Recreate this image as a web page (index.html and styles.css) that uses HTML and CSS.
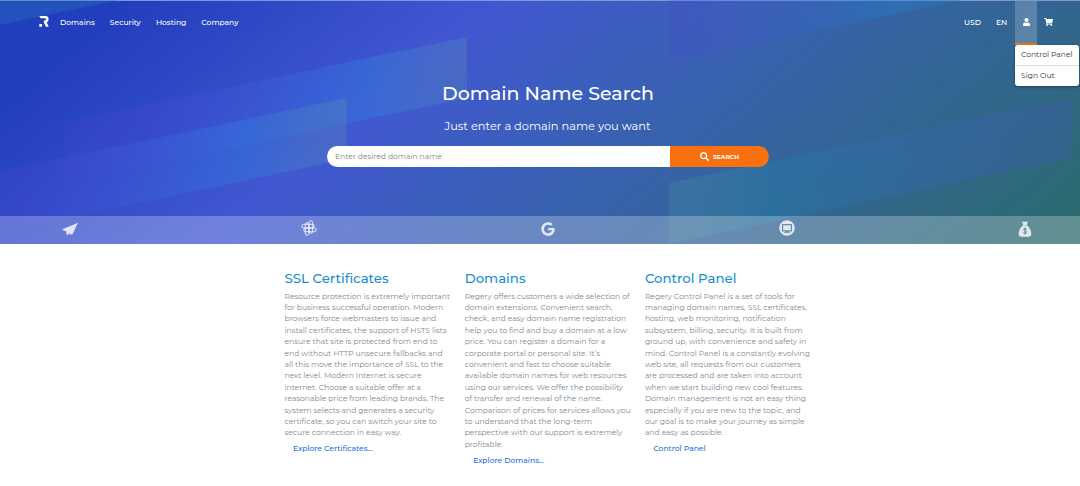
FILE: index.html
```html
<!DOCTYPE html>
<html lang="en">
<head>
  <meta charset="utf-8">
  <title>Domain Name Search</title>
  <link rel="stylesheet" href="styles.css">
</head>
<body>
  <header class="hero">
    <svg class="hero-bg" viewBox="0 0 1080 244" preserveAspectRatio="none">
      <defs>
        <linearGradient id="band">
          <stop offset="0" stop-color="#4a3fd8" stop-opacity=".2"/>
          <stop offset=".2" stop-color="#4a48d8" stop-opacity=".24"/>
          <stop offset=".75" stop-color="#3080e0" stop-opacity=".4"/>
          <stop offset="1" stop-color="#6090b0" stop-opacity=".3"/>
        </linearGradient>
        <linearGradient id="bandRight">
          <stop offset="0" stop-color="#50a0a0" stop-opacity=".2"/>
          <stop offset=".25" stop-color="#2080a8" stop-opacity=".4"/>
          <stop offset="1" stop-color="#4a4fc8" stop-opacity=".22"/>
        </linearGradient>
        <linearGradient id="bandTop">
          <stop offset="0" stop-color="#4a3fd8" stop-opacity=".2"/>
          <stop offset=".3" stop-color="#4058d0" stop-opacity=".22"/>
          <stop offset=".75" stop-color="#2080c8" stop-opacity=".38"/>
          <stop offset="1" stop-color="#2080c8" stop-opacity=".38"/>
        </linearGradient>
      </defs>
      <path d="M0 0H118L0 25Z" fill="#2a78c0" fill-opacity=".35"/>
      <path d="M65 122L467 37V98L65 183Z" fill="url(#band)"/>
      <path d="M-55 183L346.500 98V159L-55 244Z" fill="url(#band)"/>
      <path d="M669 183L1071 98V158L669 244Z" fill="url(#bandRight)"/>
      <path d="M669 0H961L669 62Z" fill="url(#bandTop)"/>
    </svg>

    <!-- Navigation -->
    <nav class="navbar">
      <svg class="logo" viewBox="0 0 10 11">
        <path d="M.3 0H6.500Q9.600 0 9.600 3.300Q9.600 5.600 7.700 6.400L9.800 10.800H7L4.900 6.400V4.500H6Q7 4.500 7 3.400Q7 2.300 6 2.300H1.600Z" fill="#fff"/>
        <path d="M.3 8h2.800v2.800H.3z" fill="#fff"/>
      </svg>
      <ul class="menu">
        <li><a>Domains</a></li>
        <li><a>Security</a></li>
        <li><a>Hosting</a></li>
        <li><a>Company</a></li>
      </ul>
      <ul class="menu-right">
        <li class="currency">USD</li>
        <li class="lang">EN</li>
        <li class="user">
          <svg width="7" height="8" viewBox="0 0 448 512"><path fill="#fff" d="M224 256c70.700 0 128-57.300 128-128S294.700 0 224 0 96 57.300 96 128s57.300 128 128 128zm89.600 32h-16.700c-22.200 10.200-46.900 16-72.900 16s-50.600-5.800-72.900-16h-16.700C60.200 288 0 348.200 0 422.400V464c0 26.500 21.500 48 48 48h352c26.500 0 48-21.500 48-48v-41.600c0-74.200-60.200-134.400-134.400-134.400z"/></svg>
          <div class="dropdown">
            <a>Control Panel</a>
            <a>Sign Out</a>
          </div>
        </li>
        <li class="cart">
          <svg width="9" height="8" viewBox="0 0 576 512"><path fill="#fff" d="M528.120 301.319l47.273-208C578.806 78.301 567.391 64 551.990 64H159.208l-9.166-44.810C147.758 8.021 137.930 0 126.529 0H24C10.745 0 0 10.745 0 24v16c0 13.255 10.745 24 24 24h69.883l70.248 343.435C147.325 417.100 136 435.222 136 456c0 30.928 25.072 56 56 56s56-25.072 56-56c0-15.674-6.447-29.835-16.824-40h209.647C430.447 426.165 424 440.326 424 456c0 30.928 25.072 56 56 56s56-25.072 56-56c0-22.172-12.888-41.332-31.579-50.405l5.517-24.276c3.413-15.018-8.002-29.319-23.403-29.319H218.117l-6.545-32h293.145c11.206 0 20.920-7.754 23.403-18.681z"/></svg>
        </li>
      </ul>
    </nav>

    <!-- Search -->
    <div class="search">
      <h1>Domain Name Search</h1>
      <p>Just enter a domain name you want</p>
      <form class="search-form">
        <input type="text" placeholder="Enter desired domain name">
        <button type="button">
          <svg width="9" height="9" viewBox="0 0 512 512"><path fill="#fff" d="M505 442.700L405.300 343c-4.500-4.500-10.600-7-17-7H372c27.600-35.300 44-79.700 44-128C416 93.100 322.900 0 208 0S0 93.100 0 208s93.100 208 208 208c48.300 0 92.700-16.400 128-44v16.300c0 6.400 2.500 12.500 7 17l99.700 99.700c9.400 9.400 24.600 9.400 33.900 0l28.300-28.300c9.400-9.400 9.400-24.600.1-34zM208 336c-70.700 0-128-57.200-128-128 0-70.700 57.200-128 128-128 70.700 0 128 57.200 128 128 0 70.700-57.200 128-128 128z"/></svg>
          <span>SEARCH</span>
        </button>
      </form>
    </div>

    <!-- Services -->
    <div class="services">
      <svg viewBox="0 0 16 16"><path d="M16 1.800L.5 8.300Q.2 9 1 9.300L4.200 10.300L4.500 13.500L6 13.700L7.300 12.300L8 13.600L10.500 13.200Z"/></svg>
      <svg class="outline" viewBox="0 0 16 16">
        <rect x="4.300" y="2.800" width="3.700" height="12.400" rx="1.850"/>
        <rect x="8" y=".8" width="3.700" height="12.400" rx="1.850"/>
        <rect x=".8" y="4.300" width="12.400" height="3.700" rx="1.850"/>
        <rect x="2.800" y="8" width="12.400" height="3.700" rx="1.850"/>
      </svg>
      <svg class="google" viewBox="0 0 488 512"><path d="M488 261.800C488 403.300 391.100 504 248 504 110.800 504 0 393.200 0 256S110.800 8 248 8c66.800 0 123 24.500 166.300 64.900l-67.500 64.900C258.500 52.600 94.300 116.600 94.300 256c0 86.500 69.100 156.600 153.700 156.600 98.200 0 135-70.400 140.800-106.900H248v-85.300h236.100c2.300 12.700 3.900 24.900 3.900 41.400z"/></svg>
      <svg class="monitor" viewBox="0 0 16 16"><path fill-rule="evenodd" d="M8 .2a7.800 7.800 0 100 15.600A7.800 7.800 0 008 .2zM3 4h10v7.500H9.500v.5H11v.7H5V12h1.500v-.5H3zM4.200 5.200v5.100h7.600V5.200z"/></svg>
      <svg class="money" viewBox="0 0 16 16">
        <path fill-rule="evenodd" d="M5 .3L6.600 1L8 .5L9.400 1L11 .3L9.900 4H6.100ZM6.100 4.300H9.900C12.500 6.500 14.300 9.500 14.300 12.500Q14.300 15.700 11.500 15.700H4.500Q1.700 15.700 1.700 12.500C1.700 9.500 3.500 6.500 6.100 4.300Z"/>
        <path class="dollar" d="M9.700 8Q8 7 6.800 8Q6.200 9.200 8 9.600Q10.200 10.200 9.500 11.700Q8 12.900 6.200 11.700M8 6.600V13.400"/>
      </svg>
    </div>
  </header>

  <main class="columns">
    <section class="col">
      <h2>SSL Certificates</h2>
      <p>Resource protection is extremely important<br>for business successful operation. Modern<br>browsers force webmasters to issue and<br>install certificates, the support of HSTS lists<br>ensure that site is protected from end to<br>end without HTTP unsecure fallbacks and<br>all this move the importance of SSL to the<br>next level. Modern Internet is secure<br>internet. Choose a suitable offer at a<br>reasonable price from leading brands. The<br>system selects and generates a security<br>certificate, so you can switch your site to<br>secure connection in easy way.</p>
      <a>Explore Certificates...</a>
    </section>
    <section class="col">
      <h2>Domains</h2>
      <p>Regery offers customers a wide selection of<br>domain extensions. Convenient search,<br>check, and easy domain name registration<br>help you to find and buy a domain at a low<br>price. You can register a domain for a<br>corporate portal or personal site. It’s<br>convenient and fast to choose suitable<br>available domain names for web resources<br>using our services. We offer the possibility<br>of transfer and renewal of the name.<br>Comparison of prices for services allows you<br>to understand that the long-term<br>perspective with our support is extremely<br>profitable.</p>
      <a>Explore Domains...</a>
    </section>
    <section class="col">
      <h2>Control Panel</h2>
      <p>Regery Control Panel is a set of tools for<br>managing domain names, SSL certificates,<br>hosting, web monitoring, notification<br>subsystem, billing, security. It is built from<br>ground up, with convenience and safety in<br>mind. Control Panel is a constantly evolving<br>web site, all requests from our customers<br>are processed and are taken into account<br>when we start building new cool features.<br>Domain management is not an easy thing<br>especially if you are new to the topic, and<br>our goal is to make your journey as simple<br>and easy as possible.</p>
      <a>Control Panel</a>
    </section>
  </main>
</body>
</html>
```
FILE: styles.css
```css
* {
  box-sizing: border-box;
}

body {
  margin: 0;
  font-family: Montserrat, Inter, sans-serif;
  font-size: 7.6px;
  line-height: 11.4px;
  color: #80888f;
  background: #fff;
  overflow: hidden;
}

ul {
  list-style: none;
  margin: 0;
  padding: 0;
}

/* hero */
.hero {
  position: relative;
  display: flex;
  flex-direction: column;
  height: 244px;
  color: #fff;
  background: linear-gradient(140deg, #213ebc 0%, #213ebc 9%, #4157d2 36%, #3b5fbc 50%, #34649a 72%, #2b6b6b 100%);
  border-top: 1px solid #8197d3;
}

.hero-bg {
  position: absolute;
  top: -1px;
  left: 0;
  width: 100%;
  height: 244px;
}

/* navbar */
.navbar {
  position: relative;
  z-index: 1;
  display: flex;
  height: 44px;
  padding-left: 39px;
}

.logo {
  width: 10px;
  height: 11px;
  margin-top: 15px;
}

.menu,
.menu-right {
  display: flex;
  font-weight: 500;
  line-height: 43px;
}

.menu {
  gap: 15px;
  margin-left: 11px;
}

.menu-right {
  margin-left: auto;
  padding-right: 27px;
}

.currency {
  width: 32px;
}

.lang {
  width: 19px;
}

.user {
  position: relative;
  display: flex;
  justify-content: center;
  width: 22px;
  padding-top: 17px;
  background: rgba(255, 255, 255, .2);
  border-bottom: 2px solid #f97010;
}

.cart {
  display: flex;
  padding: 17px 0 0 7px;
}

.dropdown {
  position: absolute;
  top: 44px;
  left: 0;
  width: 64px;
  background: #fff;
  border-radius: 3px;
  box-shadow: 0 1px 3px rgba(0, 0, 0, .4);
  color: #333;
}

.dropdown a {
  display: block;
  height: 20px;
  padding-left: 6px;
  line-height: 20px;
  font-weight: 400;
  white-space: nowrap;
}

.dropdown a + a {
  height: 21px;
  border-top: 1px solid #ddd;
}

/* search */
.search {
  position: relative;
  height: 171px;
  padding-top: 37px;
  text-align: center;
}

.search h1 {
  margin: 0 0 0 16px;
  font-size: 19px;
  font-weight: 500;
  line-height: 24px;
}

.search p {
  margin: 12px 0 0 15px;
  font-size: 11.4px;
  line-height: 17px;
}

.search-form {
  display: flex;
  width: 442px;
  height: 21px;
  margin: 11px 0 0 327px;
  border-radius: 11px;
  overflow: hidden;
}

.search-form input {
  width: 343px;
  padding: 0 8px;
  border: 0;
  font: inherit;
}

.search-form input::placeholder {
  color: #7b8288;
}

.search-form button {
  display: flex;
  align-items: center;
  justify-content: center;
  gap: 4px;
  flex: 1;
  padding: 0;
  border: 0;
  background: #f97010;
  color: #fff;
  font-family: inherit;
  font-size: 6px;
  font-weight: 700;
}

.search-form span {
  padding-top: 1px;
}

/* service icons */
.services {
  position: relative;
  display: flex;
  justify-content: space-between;
  height: 28px;
  padding: 5px 47px 0 62px;
  background: rgba(255, 255, 255, .25);
}

.services svg {
  width: 16px;
  height: 16px;
  fill: rgba(255, 255, 255, .8);
}

.services .outline {
  margin-top: -1px;
  fill: none;
  stroke: rgba(255, 255, 255, .8);
}

.services .google {
  height: 14px;
  margin-top: 1px;
}

.services .monitor {
  margin: -1px -1px 0 1px;
}

.services .dollar {
  fill: none;
  stroke: #5b8b95;
}

/* columns */
.columns {
  display: grid;
  grid-template-columns: repeat(3, 180.2px);
  padding: 26px 0 0 284.5px;
}

.col h2 {
  margin: 0 0 3.5px;
  font-size: 13.3px;
  font-weight: 500;
  line-height: 17px;
  color: #1790d0;
}

.col p {
  margin: 0 0 4.5px;
  white-space: nowrap;
}

.col a {
  margin-left: 8.5px;
  font-weight: 500;
  color: #1a6fe8;
}
```
